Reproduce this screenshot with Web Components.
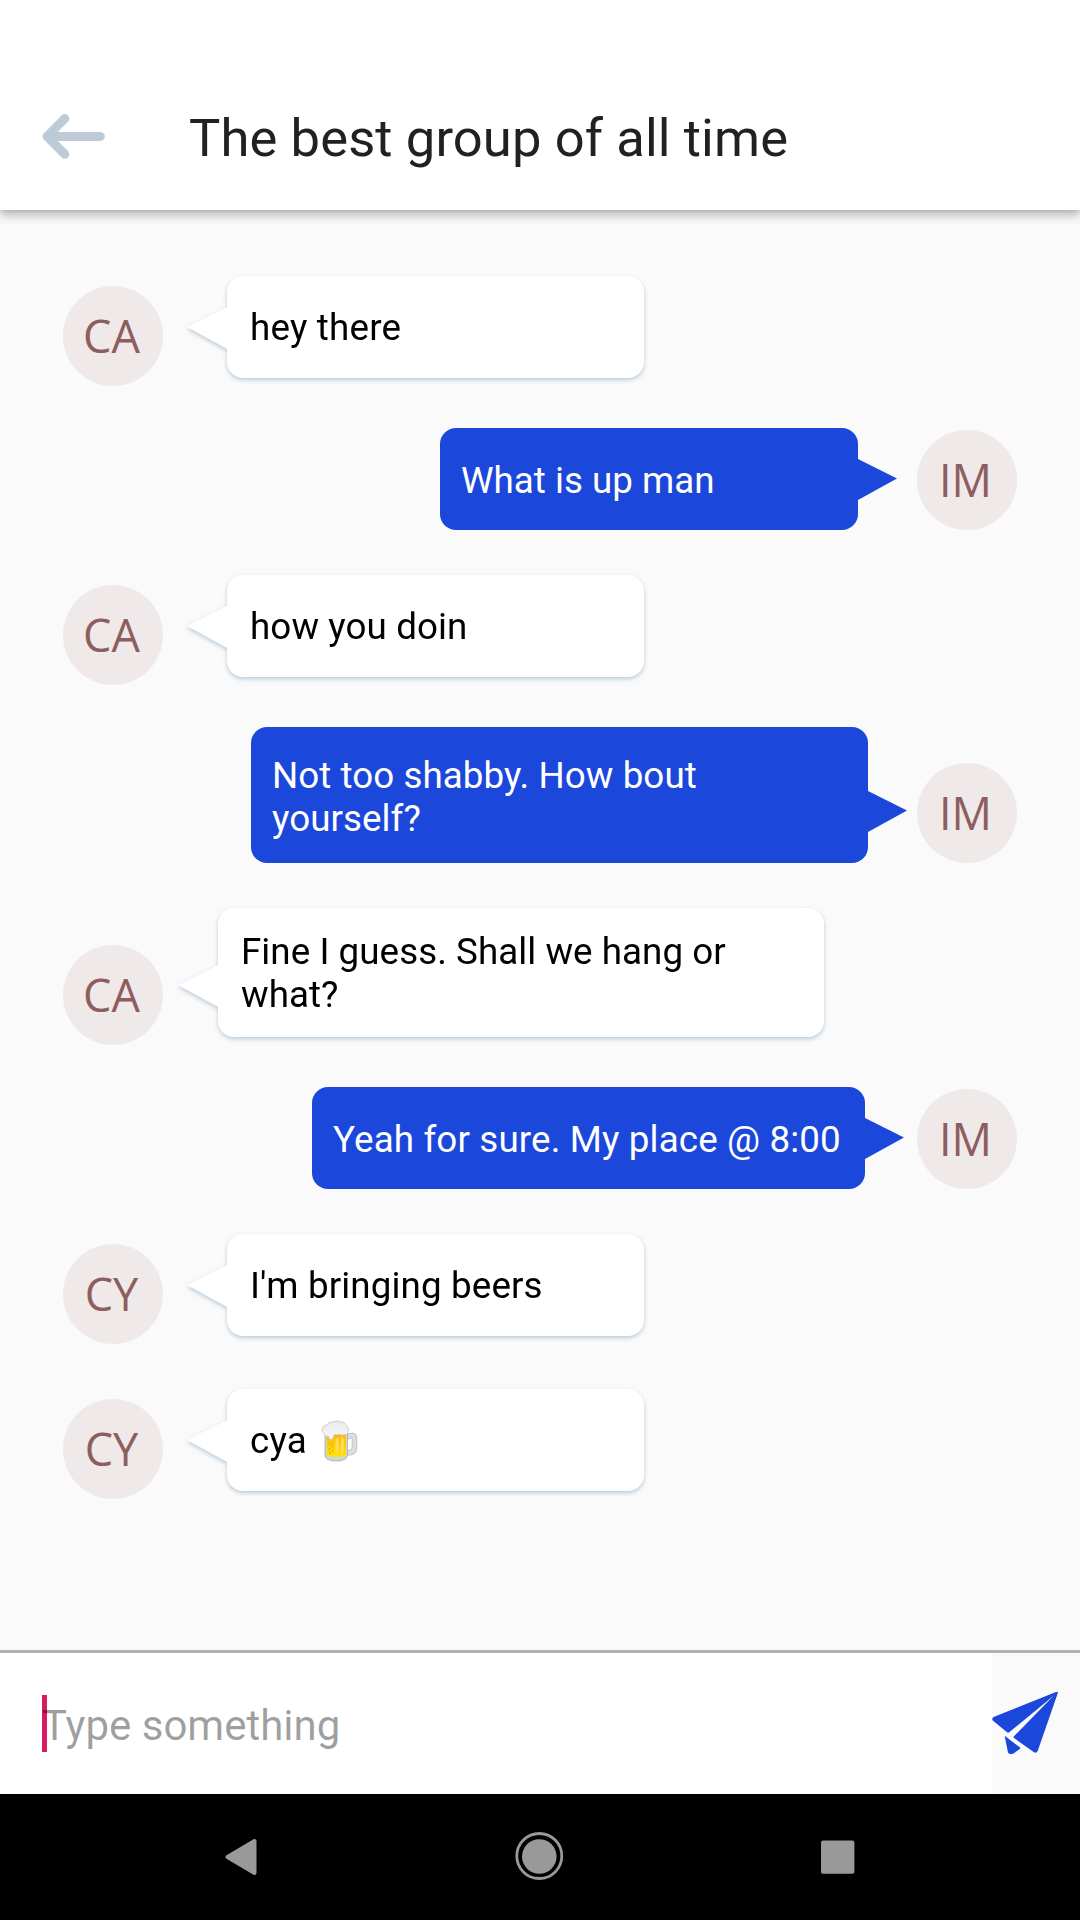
<!DOCTYPE html>
<html lang="en">
<head>
<meta charset="utf-8">
<title>Group chat</title>
<style>
  html, body { margin: 0; height: 100%; background: #fafafa; }
  body { font-family: Roboto, "Liberation Sans", sans-serif; overflow: hidden; }
</style>
</head>
<body>
<chat-screen>
  <chat-header slot="header">The best group of all time</chat-header>
  <chat-message initials="CA" side="in" style="--gap:24px;--track:.2px">hey there</chat-message>
  <chat-message initials="IM" side="out" style="--gap:20px;--track:0">What is up man</chat-message>
  <chat-message initials="CA" side="in" style="--gap:24px">how you doin</chat-message>
  <chat-message initials="IM" side="out" style="--gap:10px;--width:617px;--height:136px;--tail:64px;--text:27px;--track:.06px">Not too shabby. How bout<br>yourself?</chat-message>
  <chat-message initials="CA" side="in" style="--gap:15px;--width:606px;--height:129px;--tail:57px;--text:22px;--drop:37px;--track:.05px">Fine I guess. Shall we hang or<br>what?</chat-message>
  <chat-message initials="IM" side="out" style="--gap:13px;--width:553px;--track:.14px">Yeah for sure. My place @ 8:00</chat-message>
  <chat-message initials="CY" side="in" style="--gap:24px;--track:.13px">I'm bringing beers</chat-message>
  <chat-message initials="CY" side="in" style="--gap:24px;--track:.2px">cya <beer-mug></beer-mug></chat-message>
  <chat-composer slot="footer">Type something</chat-composer>
  <system-nav slot="footer"></system-nav>
</chat-screen>

<script>
function define(name, html, setup) {
  const t = document.createElement('template');
  t.innerHTML = html;
  customElements.define(name, class extends HTMLElement {
    constructor() {
      super();
      this.attachShadow({ mode: 'open' }).appendChild(t.content.cloneNode(true));
    }
    connectedCallback() { if (setup) setup(this, this.shadowRoot); }
  });
}

define('chat-screen', `
  <style>
    :host { display: flex; flex-direction: column; width: 1080px; height: 1920px; background: #fafafa; }
    main { flex: 1; display: flex; flex-direction: column; padding-top: 66px; }
  </style>
  <slot name="header"></slot>
  <main><slot></slot></main>
  <slot name="footer"></slot>`);

define('chat-header', `
  <style>
    :host { display: flex; align-items: flex-start; box-sizing: border-box; height: 210px; background: #fff;
      box-shadow: 0 5px 10px rgba(0,0,0,.28), 0 0 4px rgba(0,0,0,.14); z-index: 1; }
    svg { flex: none; margin: 110px 0 0 38px; }
    h1 { margin: 107px 0 0 79px; font-size: 52.5px; line-height: 62px; font-weight: 400; letter-spacing: .12px; color: #212121; white-space: nowrap; }
  </style>
  <svg width="72" height="54" viewBox="38 110 72 54" fill="none" stroke="#bdcbd8" stroke-width="9" stroke-linecap="round" stroke-linejoin="round">
    <path d="M47 136.4H100.3M64.8 118.6L47 136.4L64.8 154.2"/>
    <path d="M47 136.4L55 129V143.5Z" fill="#bdcbd8" stroke="none"/>
  </svg>
  <h1><slot></slot></h1>`);

define('user-avatar', `
  <style>
    :host { display: flex; justify-content: center; box-sizing: border-box; width: 100px; height: 100px; flex: none;
      border-radius: 50%; background: #efe9e9; color: #8e5e5e;
      font: 45px/60px "Open Sans", "Noto Sans", sans-serif; padding: 20px 3px 0 0; }
  </style>
  <slot></slot>`);

define('chat-message', `
  <style>
    :host { display: flex; align-items: flex-end; padding: 0 63px; margin-bottom: 45px; }
    .balloon { display: flex; align-items: flex-start; }
    .body { box-sizing: border-box; width: var(--width, 417px); height: var(--height, 102px); border-radius: 16px;
      padding-top: var(--text, 30px); font-size: 36.75px; line-height: 43px; letter-spacing: var(--track, .1px); white-space: nowrap; }
    .tail { flex: none; width: 40px; height: 42px; margin-top: var(--tail, 31px); }
    :host([side="in"]) .balloon { align-self: flex-start; margin-left: var(--gap);
      filter: drop-shadow(0 2px 2px rgba(140,170,195,.6)); }
    :host([side="in"]) .body { background: #fff; color: #000; padding-left: 23px; }
    :host([side="in"]) .tail { fill: #fff; }
    :host([side="in"]) user-avatar { margin-top: var(--drop, 10px); }
    :host([side="out"]) { flex-direction: row-reverse; }
    :host([side="out"]) .balloon { flex-direction: row-reverse; margin-right: var(--gap); }
    :host([side="out"]) .body { width: var(--width, 418px); background: #1c47db; color: #fff;
      padding-left: 21px; padding-top: var(--text, 31px); }
    :host([side="out"]) .tail { fill: #1c47db; width: 39px; height: 41px; transform: scaleX(-1); }
  </style>
  <user-avatar></user-avatar>
  <div class="balloon">
    <svg class="tail" viewBox="0 0 40 42" preserveAspectRatio="none"><path d="M0 20L40 0V42Z"/></svg>
    <div class="body"><slot></slot></div>
  </div>`, (host, root) => {
    root.querySelector('user-avatar').textContent = host.getAttribute('initials');
    const next = host.nextElementSibling;
    if (host.getAttribute('side') === 'in' && next && next.getAttribute('side') === 'out') host.style.marginBottom = '42px';
  });

define('beer-mug', `
  <style>
    :host { display: inline-block; width: 38px; height: 42px; vertical-align: -9px; margin-left: 5px; }
    svg { display: block; }
  </style>
  <svg width="38" height="42" viewBox="0 0 38 42" role="img" aria-label="🍺">
    <defs>
      <linearGradient id="b" x1="0" y1="0" x2="0" y2="1"><stop offset="0" stop-color="#fbb90c"/><stop offset="1" stop-color="#ffe500"/></linearGradient>
      <linearGradient id="f" x1="0" y1="0" x2="0" y2="1"><stop offset="0" stop-color="#e9e9e9"/><stop offset="1" stop-color="#fafafa"/></linearGradient>
    </defs>
    <path d="M26 17Q33.500 13 33.500 19V28Q33 33 26 33" fill="none" stroke="#b9b9b9" stroke-width="5.500"/>
    <path d="M26 17Q33.500 13 33.500 19V28Q33 33 26 33" fill="none" stroke="#dedede" stroke-width="4"/>
    <path d="M4 12V35Q4 41 15 41Q26.500 41 26.500 35V12Z" fill="#d4d4d4" stroke="#aaa" stroke-width=".8"/>
    <path d="M5.800 14V34Q6 37 15 37Q25 37 25 34V14Z" fill="url(#b)"/>
    <rect x="14.500" y="18" width="3" height="15.500" rx="1.200" fill="#ffdc60"/><rect x="20" y="17.500" width="2.800" height="15.500" rx="1.200" fill="#ffdc60"/>
    <g fill="#d99a12"><circle cx="8.500" cy="24" r=".8"/><circle cx="11" cy="26" r=".8"/><circle cx="8.500" cy="29" r=".8"/><circle cx="11.500" cy="31" r=".7"/><circle cx="9" cy="33" r=".8"/><circle cx="12" cy="23" r=".6"/></g>
    <path d="M3 14Q0 11 1.500 8Q2 5 6 5Q8 1 12 2Q16-.5 20 2Q24 1.500 25 5Q28.500 8 27 11Q28 14 25 14.500Q22 15.500 18 14.500Q15 15 13 14.500Q12.500 19.500 10 19.500Q8 19.500 7.500 16Q5 17 3 14Z" fill="url(#f)" stroke="#c9c9c9" stroke-width=".9"/>
  </svg>`);

define('chat-composer', `
  <style>
    :host { display: flex; box-sizing: border-box; height: 144px; border-top: 3px solid #b1b3b2; }
    .field { display: flex; align-items: flex-start; flex: 1; background: #fff; padding: 42px 0 0 42px; }
    .caret { flex: none; width: 5px; height: 57px; margin-right: -5px; background: #d81b60; }
    .hint { font-size: 42px; line-height: 50px; margin-top: 6px; color: rgba(0,0,0,.38); white-space: nowrap; }
    .send { width: 88px; background: #fafafa; }
    svg { display: block; margin-top: 36px; }
  </style>
  <div class="field"><span class="caret"></span><span class="hint"><slot></slot></span></div>
  <div class="send">
    <svg width="70" height="70" viewBox="0 0 70 70" fill="#1c47db" role="img" aria-label="Send">
      <path d="M1.500 28L64 3Q66 2.500 65 4L17.500 43Q16.200 44.200 15 43.200L.8 31.500Q-.6 29.500 1.500 28Z"/>
      <path d="M66 3.500L45.700 62Q44.500 64.500 42 63.300L22 49Q21.200 48.200 22 47.200L64.500 3.800Q66 2.500 66 3.500Z"/>
      <path d="M13.300 47.200L28 58.400Q28.700 59.100 28 59.700L21.500 64.500Q17.500 66 16 63.500L12.800 47.700Q12.800 46.900 13.300 47.200Z"/>
    </svg>
  </div>`);

define('system-nav', `
  <style>
    :host { display: flex; justify-content: space-between; align-items: center; box-sizing: border-box;
      height: 126px; padding: 0 215px 0 213px; background: #000; }
  </style>
  <svg width="54" height="54" viewBox="-27 -27 54 54"><path d="M-12.500 0L14.500-16V16Z" fill="#999" stroke="#999" stroke-width="4" stroke-linejoin="round"/></svg>
  <svg width="54" height="54" viewBox="-27 -27 54 54"><circle r="22.500" cx=".3" cy="-1" fill="none" stroke="#999" stroke-width="2.800"/><circle cx=".3" cy="-.5" r="17.300" fill="#999"/></svg>
  <svg width="54" height="54" viewBox="-27 -27 54 54"><rect x="-17" y="-16.500" width="33.400" height="33.200" rx="2" fill="#999"/></svg>`);
</script>
</body>
</html>
